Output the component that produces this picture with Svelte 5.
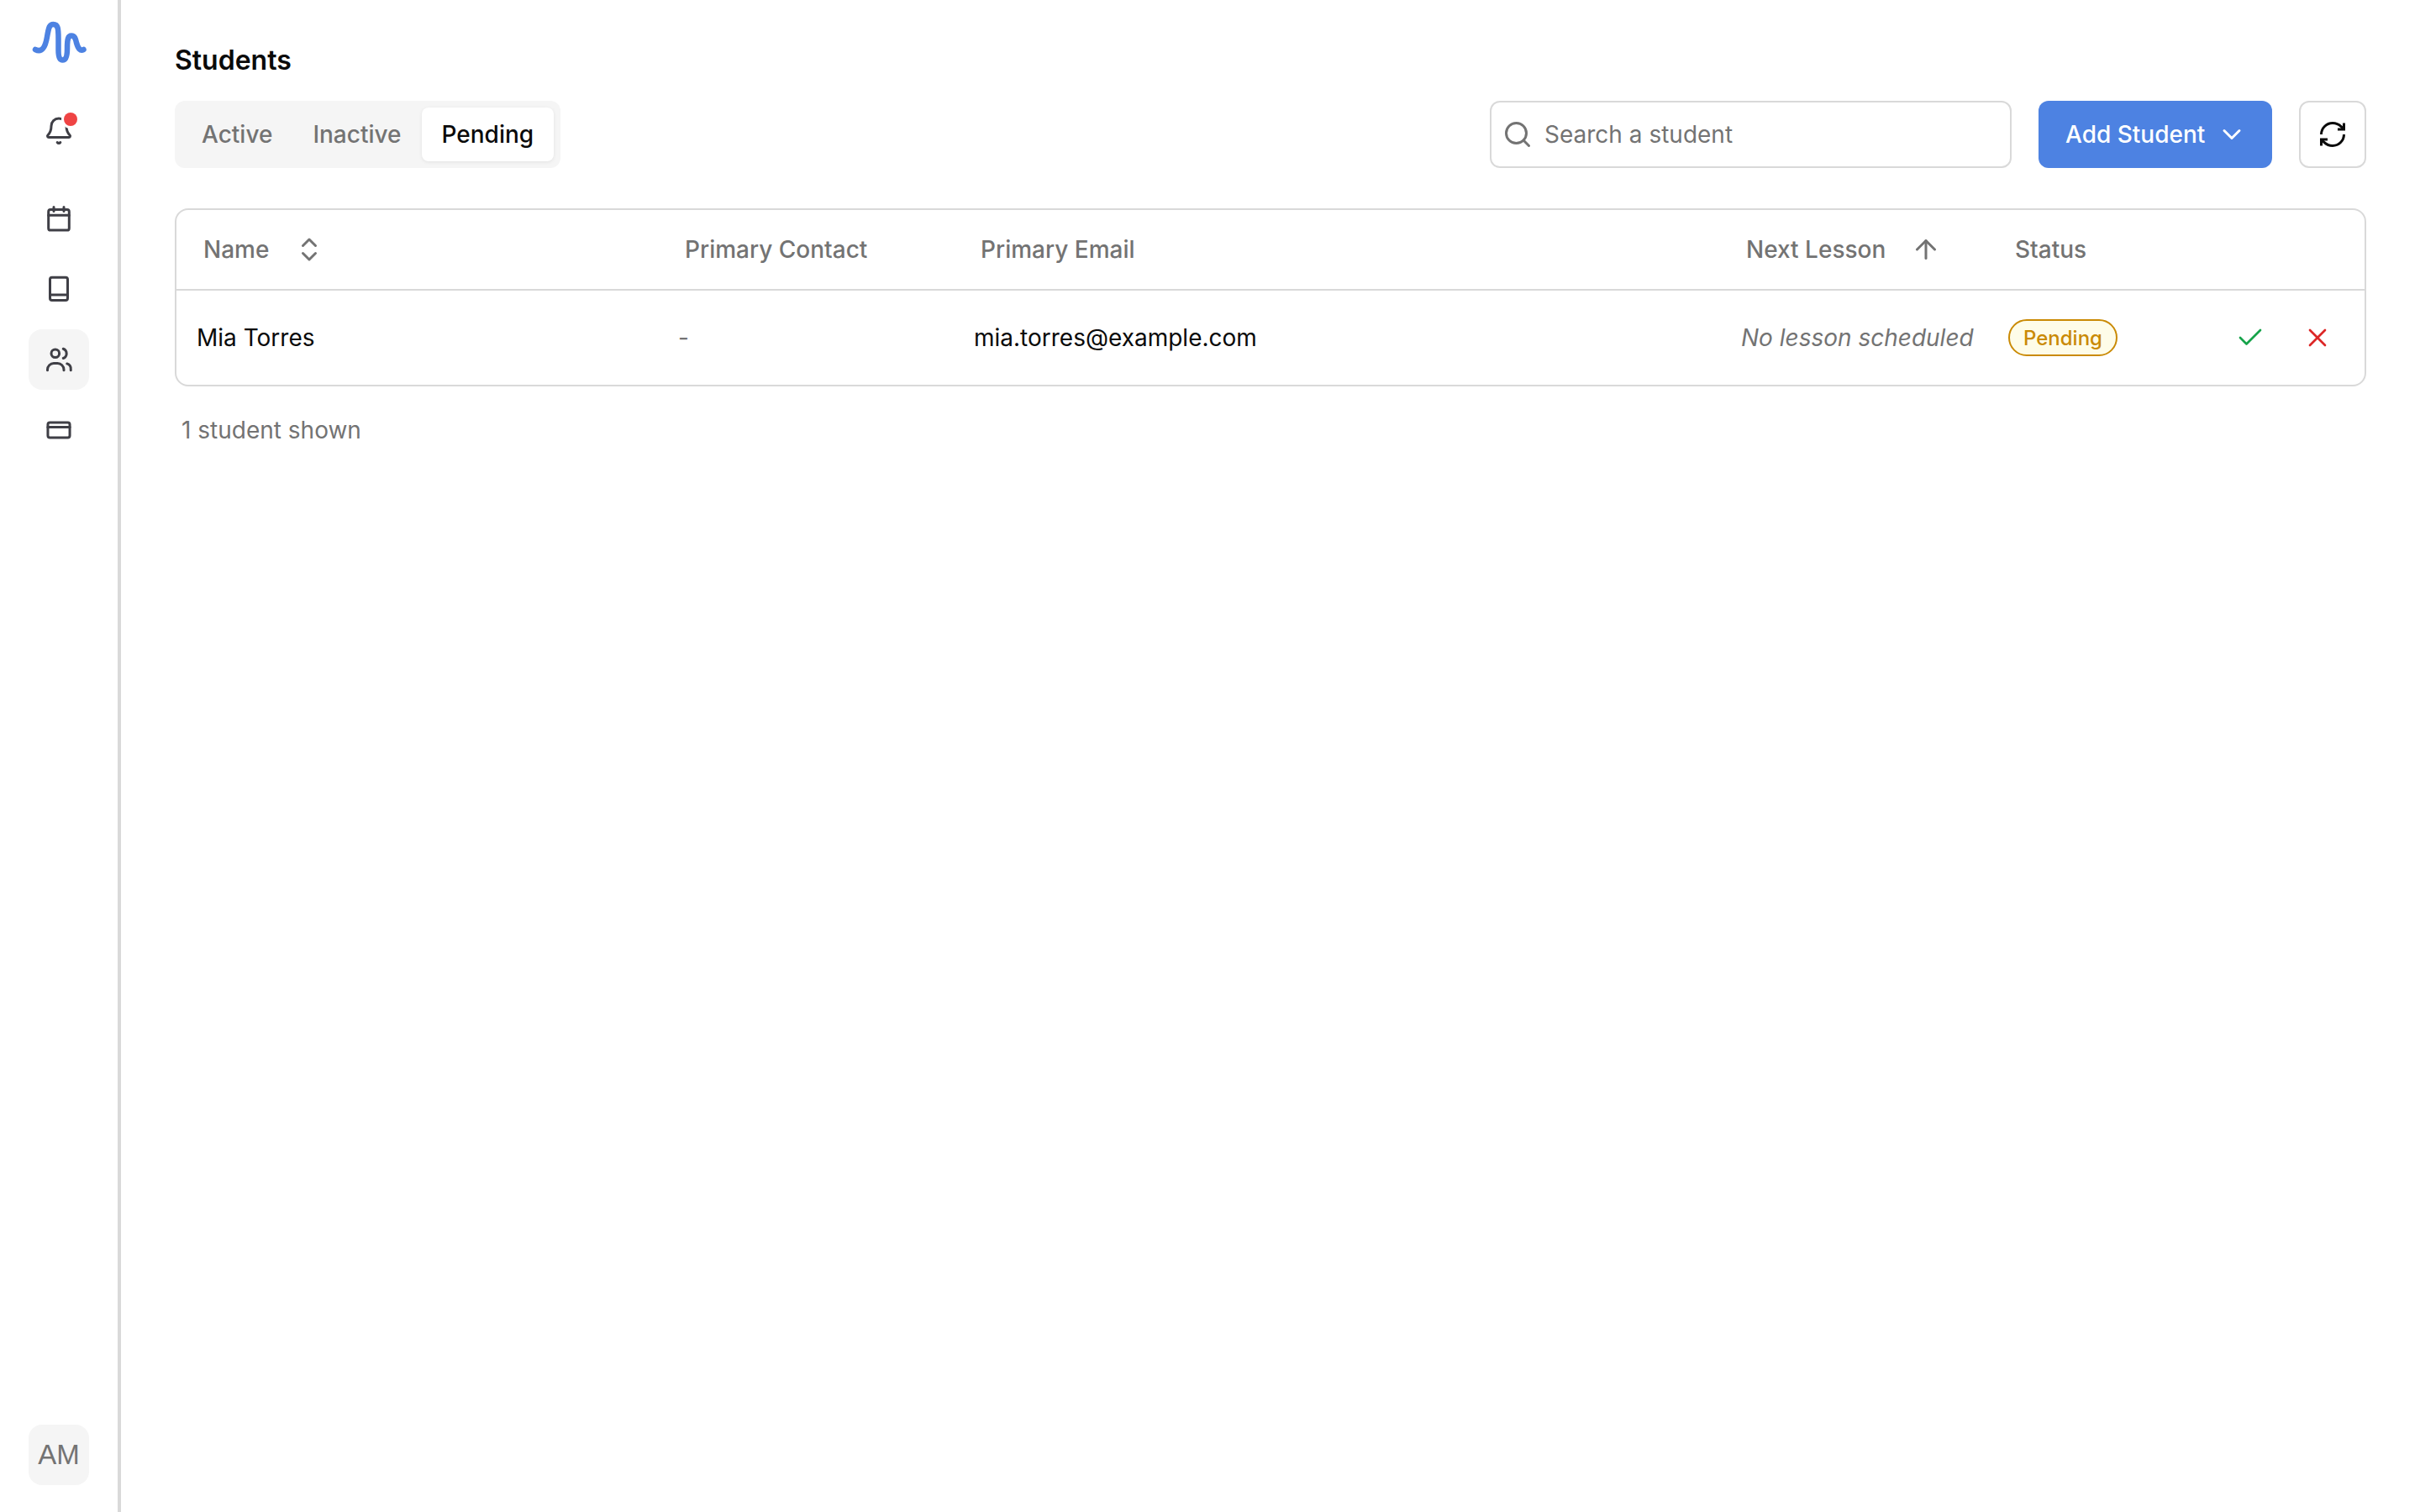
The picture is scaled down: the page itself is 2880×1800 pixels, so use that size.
<script>
  const tabs = ['Active', 'Inactive', 'Pending'];
</script>

<div class="app">
  <aside class="sidebar">
    <div class="logo">
      <svg width="72" height="60" viewBox="34 22 72 60" fill="none" stroke="#4d82e2" stroke-width="6.5" stroke-linecap="round">
        <path d="M42 61 C50 65 54 58 56 46 C58 34 59 31 63.5 31 C69 31 69.5 36 69.5 48 L69.5 62 C69.5 70 71 73.5 74.5 73.5 C79 73.5 80 68 80 60 C80 48 81 44.5 85 44.5 C89 44.5 90 48 91 53 C93 60 95.5 63 99.5 61" />
      </svg>
    </div>
    <nav class="nav">
      <div class="nav-item bell">
        <svg class="icon" viewBox="0 0 24 24"><path d="M10.8 21a1.5 1.5 0 0 0 2.4 0" /><path d="M3.262 15.326A1 1 0 0 0 4 17h16a1 1 0 0 0 .74-1.673C19.41 13.956 18 12.499 18 8A6 6 0 0 0 6 8c0 4.499-1.411 5.956-2.738 7.326" /></svg>
        <span class="dot"></span>
      </div>
      <div class="gap"></div>
      <div class="nav-item">
        <svg class="icon" viewBox="0 0 24 24"><rect x="3.8" y="5" width="16.4" height="16.4" rx="1.6" /><path d="M3.8 9.5h16.4M8 3v3.4M16 3v3.4" /></svg>
      </div>
      <div class="nav-item">
        <svg class="icon" viewBox="0 0 24 24"><rect x="5" y="2.8" width="14" height="18.2" rx="1.6" /><path d="M5 16.7h14" /></svg>
      </div>
      <div class="nav-item active">
        <svg class="icon" viewBox="0 0 24 24"><path d="M3 20.5V20a5 5 0 0 1 5-5h3a5 5 0 0 1 5 5v.5" /><circle cx="9.2" cy="7.2" r="3.2" /><path d="M18.5 15.3a4.5 4.5 0 0 1 3 4.7v.5" /><path d="M15.5 3.5a4 4 0 0 1 0 7.5" /></svg>
      </div>
      <div class="nav-item">
        <svg class="icon" viewBox="0 0 24 24"><rect x="3.3" y="6" width="17.4" height="12" rx="1.6" /><path d="M3.3 9.6h17.4" /></svg>
      </div>
    </nav>
    <div class="avatar">AM</div>
  </aside>

  <main class="main">
    <h1>Students</h1>
    <div class="toolbar">
      <div class="tabs">
        {#each tabs as tab}
          <button class="tab" class:selected={tab === 'Pending'}>{tab}</button>
        {/each}
      </div>
      <div class="search">
        <svg class="icon gray" viewBox="0 0 24 24"><circle cx="11" cy="11" r="8" /><path d="m21 21-4.3-4.3" /></svg>
        <span>Search a student</span>
      </div>
      <button class="add">
        <span>Add Student</span>
        <svg class="icon white" viewBox="0 0 24 24"><path d="m6 9 6 6 6-6" /></svg>
      </button>
      <button class="refresh" aria-label="Refresh">
        <svg class="icon black sharp" viewBox="0 0 24 24"><path d="M3 12a9 9 0 0 1 9-9 9.75 9.75 0 0 1 6.74 2.74L21 8" /><path d="M21 3v5h-5" /><path d="M21 12a9 9 0 0 1-9 9 9.75 9.75 0 0 1-6.74-2.74L3 16" /><path d="M8 16H3v5" /></svg>
      </button>
    </div>

    <div class="card">
      <table>
        <colgroup>
          <col class="c1" /><col class="c2" /><col class="c3" /><col class="c4" /><col class="c5" /><col />
        </colgroup>
        <thead>
          <tr>
            <th><span class="th">Name <svg class="icon gray" viewBox="0 0 24 24"><path d="m7 15 5 5 5-5" /><path d="m7 9 5-5 5 5" /></svg></span></th>
            <th><span class="th">Primary Contact</span></th>
            <th><span class="th">Primary Email</span></th>
            <th class="tight"><span class="th">Next Lesson <svg class="icon gray" viewBox="0 0 24 24"><path d="m5 12 7-7 7 7" /><path d="M12 19V5" /></svg></span></th>
            <th><span class="th">Status</span></th>
            <th></th>
          </tr>
        </thead>
        <tbody>
          <tr>
            <td>Mia Torres</td>
            <td class="muted">-</td>
            <td>mia.torres@example.com</td>
            <td class="muted italic">No lesson scheduled</td>
            <td><span class="pill">Pending</span></td>
            <td>
              <div class="actions">
                <svg class="icon green thin" viewBox="0 0 24 24"><path d="M20 6 9 17l-5-5" /></svg>
                <svg class="icon red thin" viewBox="0 0 24 24"><path d="M18 6 6 18" /><path d="m6 6 12 12" /></svg>
              </div>
            </td>
          </tr>
        </tbody>
      </table>
    </div>
    <p class="count">1 student shown</p>
  </main>
</div>

<style>
  :global(body) {
    margin: 0;
    background: #fff;
  }
  .app {
    display: flex;
    height: 1800px;
    font-family: Inter, "Noto Sans", sans-serif;
    font-size: 28px;
    color: #0a0a0a;
  }
  .icon {
    width: 36px;
    height: 36px;
    flex: none;
    fill: none;
    stroke: #3f3f46;
    stroke-width: 2;
    stroke-linecap: round;
    stroke-linejoin: round;
  }
  .icon.gray { stroke: #737373; }
  .icon.white { stroke: #fff; }
  .icon.black { stroke: #0a0a0a; }
  .icon.green { stroke: #16a34a; }
  .icon.red { stroke: #dc2626; }
  .icon.thin { stroke-width: 1.8; }
  .icon.sharp {
    stroke-linecap: butt;
    stroke-linejoin: miter;
  }

  .sidebar {
    width: 140px;
    border-right: 4px solid #d9d9d9;
    flex: none;
    display: flex;
    flex-direction: column;
    align-items: center;
    padding: 20px 0 32px;
    box-sizing: content-box;
    height: calc(100% - 52px);
  }
  .logo {
    height: 60px;
    display: flex;
    align-items: center;
    margin-bottom: 40px;
  }
  .nav {
    display: flex;
    flex-direction: column;
    gap: 12px;
    flex: 1;
  }
  .gap { height: 8px; }
  .nav-item {
    position: relative;
    width: 72px;
    height: 72px;
    border-radius: 16px;
    display: flex;
    align-items: center;
    justify-content: center;
  }
  .nav-item.active { background: #f5f5f5; }
  .dot {
    position: absolute;
    left: 42px;
    top: 14px;
    width: 16px;
    height: 16px;
    border-radius: 50%;
    background: #ef4444;
    box-shadow: 0 0 0 3px #fff;
  }
  .avatar {
    width: 72px;
    height: 72px;
    border-radius: 16px;
    background: #f5f5f5;
    color: #737373;
    display: flex;
    align-items: center;
    justify-content: center;
    font-family: "Liberation Sans", sans-serif;
    font-size: 33px;
  }

  .main {
    flex: 1;
    min-width: 0;
    padding: 0 64px;
  }
  h1 {
    margin: 0;
    padding-top: 52px;
    font-size: 32px;
    line-height: 40px;
    font-weight: 600;
    height: 40px;
  }
  .toolbar {
    margin-top: 28px;
    display: flex;
    align-items: stretch;
    height: 80px;
    gap: 32px;
  }
  .tabs {
    display: flex;
    align-items: stretch;
    padding: 8px;
    background: #f5f5f5;
    border-radius: 12px;
    margin-right: auto;
  }
  button {
    font: inherit;
    border: none;
    background: none;
    margin: 0;
    cursor: pointer;
  }
  .tab {
    padding: 0 24px;
    color: #737373;
    font-weight: 500;
    border-radius: 8px;
  }
  .tab.selected {
    background: #fff;
    color: #0a0a0a;
    box-shadow: 0 1px 4px rgba(0, 0, 0, 0.08);
  }
  .search {
    width: 621px;
    box-sizing: border-box;
    border: 2px solid #d9d9d9;
    border-radius: 12px;
    display: flex;
    align-items: center;
    gap: 14px;
    padding-left: 13px;
    color: #737373;
  }
  .add {
    width: 278px;
    border-radius: 12px;
    background: #4d82e2;
    color: #fff;
    font-weight: 500;
    display: flex;
    align-items: center;
    justify-content: space-between;
    padding: 0 30px 0 32px;
    box-sizing: border-box;
  }
  .refresh {
    width: 80px;
    box-sizing: border-box;
    border: 2px solid #d9d9d9;
    border-radius: 12px;
    display: flex;
    align-items: center;
    justify-content: center;
    padding: 0;
  }

  .card {
    margin-top: 48px;
    border: 2px solid #d9d9d9;
    border-radius: 16px;
    overflow: hidden;
  }
  table {
    width: 100%;
    table-layout: fixed;
    border-collapse: collapse;
  }
  .c1 { width: 573px; }
  .c2 { width: 352px; }
  .c3 { width: 913px; }
  .c4 { width: 318px; }
  .c5 { width: 230px; }
  th {
    height: 95px;
    padding: 0 0 0 32px;
    text-align: left;
    font-weight: 500;
    color: #737373;
    border-bottom: 2px solid #d9d9d9;
    box-sizing: border-box;
  }
  th.tight { padding-left: 30px; }
  .th {
    display: flex;
    align-items: center;
    gap: 30px;
  }
  td {
    height: 112px;
    padding: 0 0 0 24px;
    white-space: nowrap;
  }
  .muted { color: #737373; }
  .italic { font-style: italic; }
  .pill {
    display: inline-flex;
    align-items: center;
    height: 44px;
    box-sizing: border-box;
    padding: 0 16px;
    border: 2px solid #ca8a04;
    border-radius: 22px;
    background: #fefce8;
    color: #ca8a04;
    font-size: 24px;
    font-weight: 500;
  }
  .actions {
    display: flex;
    justify-content: flex-end;
    gap: 44px;
    padding-right: 38px;
  }
  .count {
    margin: 34px 0 0;
    padding-left: 8px;
    line-height: 36px;
    color: #737373;
  }
</style>
